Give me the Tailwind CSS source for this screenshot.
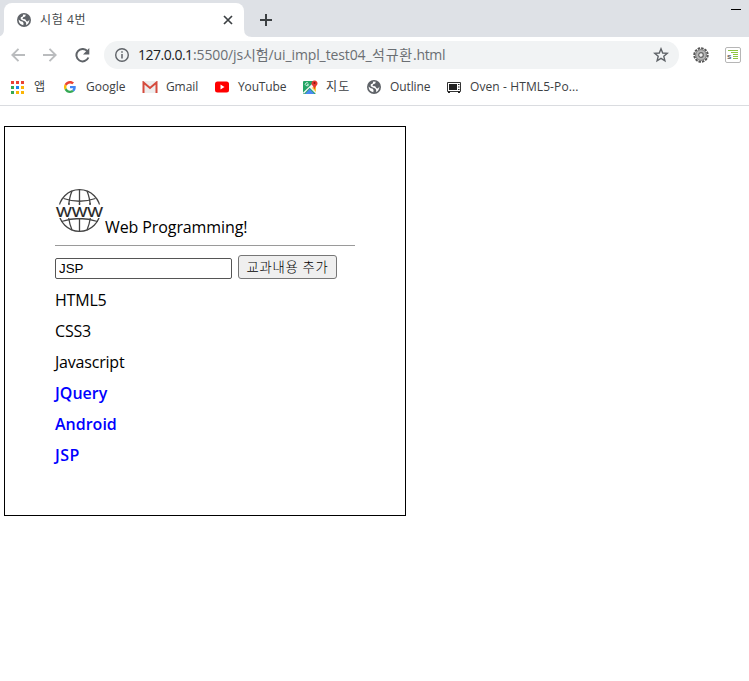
<!DOCTYPE html>
<html lang="ko">
<head>
<meta charset="utf-8">
<title>시험 4번</title>
<script src="https://cdn.jsdelivr.net/npm/@tailwindcss/browser@4"></script>
</head>
<body class="h-[681px] w-[749px] overflow-hidden bg-white font-['Open_Sans','Noto_Sans_CJK_KR',sans-serif] text-black">
<svg class="hidden">
  <symbol id="globe" viewBox="0 0 14 14"><circle cx="7" cy="7" r="7" fill="#5f6368"/><path d="M1.5 6.5 3.8 8.2 5.4 8.4 6.6 10 6.3 12.2Q2 11.5 1.5 6.5ZM6.2 1.6 8.8 1.8 8.2 3.4 6.2 4.2 5.5 6 8.2 6.3 9.5 8.2 11 8.4 12.4 6.4Q12.3 10.4 9 12L9.2 10 8.2 8.6 5.4 7.2 3.7 6.3 3.8 4.3 5.7 3.6Z" fill="#fff"/></symbol>
</svg>
<header>
  <div class="flex h-[37px] items-start bg-[#dee1e6] pl-1 pt-[3px]">
    <div class="relative flex h-[34px] w-[240px] items-center rounded-t-lg bg-white pl-[13px] pr-[11px]">
      <svg class="absolute -left-2 bottom-0" width="8" height="8"><path d="M8 0V8H0Q8 8 8 0Z" fill="#fff"/></svg>
      <svg class="absolute -right-2 bottom-0" width="8" height="8"><path d="M0 0V8H8Q0 8 0 0Z" fill="#fff"/></svg>
      <svg width="14" height="14"><use href="#globe"/></svg>
      <span class="ml-[9px] whitespace-nowrap text-[12px] leading-4 tracking-[0.6px] text-[#45494d]">시험 4번</span>
      <svg class="ml-auto" width="10" height="10" viewBox="0 0 10 10"><path d="M1 1 9 9M9 1 1 9" stroke="#3c4043" stroke-width="1.7"/></svg>
    </div>
    <svg class="ml-4 mt-[11px]" width="12" height="12" viewBox="0 0 12 12"><path d="M6 0V12M0 6H12" stroke="#3c4043" stroke-width="2"/></svg>
    <div class="ml-auto mr-2 mt-[6px] h-px w-[10px] bg-black"></div>
  </div>
  <div class="flex h-9 items-center pl-[11px] pr-2">
    <svg width="14" height="14" viewBox="0 0 14 14" fill="none" stroke="#babcbe" stroke-width="1.9"><path d="M14 7H1.5M7.5 .8 1.3 7 7.5 13.2"/></svg>
    <svg class="ml-[18px]" width="14" height="14" viewBox="0 0 14 14" fill="none" stroke="#babcbe" stroke-width="1.9"><path d="M0 7H12.5M6.5 .8 12.7 7 6.5 13.2"/></svg>
    <svg class="ml-[18px]" width="15" height="15" viewBox="0 0 15 15"><path d="M12.4 3.2A6.2 6.2 0 1 0 13.4 9.5" fill="none" stroke="#5f6368" stroke-width="2"/><path d="M14.3 0V6.4H8Z" fill="#5f6368"/></svg>
    <div class="ml-[14px] flex h-7 w-[575px] items-center rounded-full bg-[#f1f3f4] pl-[11px] pr-[10px]">
      <svg width="14" height="14" viewBox="0 0 14 14"><circle cx="7" cy="7" r="6.3" fill="none" stroke="#5f6368" stroke-width="1.4"/><path d="M7 6V10.5M7 3.3V4.8" stroke="#5f6368" stroke-width="1.5"/></svg>
      <div class="ml-[9px] flex whitespace-nowrap text-[14px] leading-5 text-[#6b6f73]"><span class="w-[55px] tracking-[-0.5px] text-[#202124]">127.0.0.1</span><span class="w-[179px] tracking-[-0.12px]">:5500/js시험/ui_impl_test04_</span><span class="w-[41px] tracking-[0.8px]">석규환</span><span class="tracking-[-0.3px]">.html</span></div>
      <svg class="ml-auto" width="16" height="16" viewBox="0 0 16 16"><path d="M8 1.8 9.7 6 14.3 6.3 10.8 9.3 11.9 13.8 8 11.4 4.1 13.8 5.2 9.3 1.7 6.3 6.3 6Z" fill="none" stroke="#5f6368" stroke-width="1.4"/></svg>
    </div>
    <svg class="ml-[14px]" width="16" height="16" viewBox="0 0 16 16"><circle cx="8" cy="8" r="6.7" fill="none" stroke="#555" stroke-width="2" stroke-dasharray="2.5 1"/><circle cx="8" cy="8" r="5.4" fill="#b5b5b5" stroke="#777"/><circle cx="8" cy="8" r="2.3" fill="#eee" stroke="#666" stroke-width="1.2"/></svg>
    <svg class="ml-4" width="16" height="16" viewBox="0 0 16 16"><rect x=".5" y=".5" width="15" height="15" rx="1.5" fill="#fff" stroke="#b6b6b6"/><path d="M3 3.5H13M6 5.5H13M8 7.5H13M8 9.5H13M8 11.5H13" stroke="#8cc63f"/><text x="2" y="12" font-size="8" font-weight="700" fill="#666" font-family="Liberation Sans">s</text></svg>
  </div>
  <nav class="flex h-[33px] items-center whitespace-nowrap border-b border-[#dadce0] pb-1 pl-[11px] text-[12px] leading-4 text-[#3c4043]">
    <div class="flex w-[53px] items-center"><svg width="13" height="13" viewBox="0 0 13 13"><path d="M0 0H3V3H0ZM5 0H8V3H5ZM10 0H13V3H10Z" fill="#ea4335"/><path d="M0 5H3V8H0ZM0 10H3V13H0Z" fill="#34a853"/><path d="M5 5H8V8H5Z" fill="#1a86f0"/><path d="M10 5H13V8H10ZM5 10H8V13H5ZM10 10H13V13H10Z" fill="#fbb506"/></svg><span class="ml-[10px]">앱</span></div>
    <div class="flex w-[78px] items-center"><svg width="12" height="12" viewBox="0 0 48 48"><path fill="#EA4335" d="M24 9.500c3.500 0 6.700 1.200 9.200 3.600l6.900-6.900C35.900 2.400 30.500 0 24 0 14.600 0 6.500 5.400 2.600 13.200l8 6.200C12.400 13.700 17.700 9.500 24 9.500z"/><path fill="#4285F4" d="M47 24.500c0-1.600-.2-3.100-.4-4.500H24v9h12.900c-.6 3-2.300 5.500-4.800 7.200l7.700 6C44.400 38 47 31.800 47 24.500z"/><path fill="#FBBC05" d="M10.500 28.600a14 14 0 0 1 0-9.200l-8-6.200a24 24 0 0 0 0 21.600z"/><path fill="#34A853" d="M24 48c6.500 0 11.900-2.100 15.900-5.800l-7.700-6c-2.200 1.400-4.900 2.300-8.200 2.300-6.300 0-11.600-4.200-13.500-9.900l-8 6.200C6.500 42.600 14.600 48 24 48z"/></svg><span class="ml-[10px]">Google</span></div>
    <div class="flex w-[73px] items-center"><svg width="16" height="12" viewBox="0 0 16 12"><path d="M1 0H15V12H1Z" fill="#eeeeee"/><path d="M1.500 12V1.500L8 7 14.500 1.500V12" fill="none" stroke="#d54b3d" stroke-width="2"/></svg><span class="ml-2 tracking-[-0.1px]">Gmail</span></div>
    <div class="flex w-[88px] items-center"><svg width="14" height="12" viewBox="0 0 14 12"><rect y=".5" width="14" height="11" rx="2.500" fill="#f00"/><path d="M5.500 3.600V8.400L9.500 6Z" fill="#fff"/></svg><span class="ml-[9px] tracking-[-0.15px]">YouTube</span></div>
    <div class="flex w-[64px] items-center"><svg width="15" height="14" viewBox="0 0 15 14"><rect y="1" width="13" height="13" rx="1" fill="#23a565"/><path d="M0 12.500 9 4 13 8V14L6.700 7.700 1 13.800Z" fill="#f2f2f2"/><path d="M2 14 6.700 9 11.500 14Z" fill="#4a89f3"/><path d="M9 8 13 4V12Z" fill="#fcc934"/><path d="M5.300 3.400A1.600 1.600 0 1 0 5.500 4.700H4" fill="none" stroke="#fff" stroke-width=".8"/><path d="M11.400 9.500Q11 7 8.700 4.500A3 3 0 1 1 14.300 4.500Q12 7 11.400 9.500Z" fill="#e5392f"/><circle cx="11.500" cy="3" r="1" fill="#811411"/></svg><span class="ml-2 tracking-[1.2px]">지도</span></div>
    <div class="flex w-[80px] items-center"><svg width="14" height="14"><use href="#globe"/></svg><span class="ml-[9px] tracking-[-0.1px]">Outline</span></div>
    <div class="flex items-center"><svg width="14" height="11" viewBox="0 0 14 11"><path d="M.5.500H13.500V9.500H.5Z" fill="#fff" stroke="#333"/><path d="M2 2H10V8H2ZM11 2H12.500V3H11ZM11 4.500H12.500V5.500H11ZM11 7H12.500V8H11ZM1 9.500H3V11H1ZM11 9.500H13V11H11Z" fill="#222"/></svg><span class="ml-[9px] tracking-[0.1px]">Oven - HTML5-Po...</span></div>
  </nav>
</header>
<main class="ml-1 mt-5 h-[390px] w-[402px] border border-black px-[50px] pt-[60px]">
  <div class="flex h-[59px] items-end border-b border-[#9a9a9a]">
    <svg class="mb-[11px]" width="50" height="48" viewBox="0 0 50 48" fill="none" stroke="#444" stroke-width="1.300"><circle cx="24.500" cy="24.500" r="20.800"/><path d="M24.500 3.500V45.500M17 5Q14 12 13.500 22M32 5Q35 12 35.500 22M17 44Q14.500 38 13.500 31M32 44Q34.500 38 35.500 31M8.500 12.500Q24.500 18 40.500 12.500M6.500 35.500Q24.500 29.500 42.500 35.500"/><path d="M0 18.500H49V32H0Z" fill="#fff" stroke="none"/><path d="M24.500 17V19M14 17V19M35 17V19" /><text x="1" y="30.500" font-family="Liberation Sans" font-size="15" textLength="47" lengthAdjust="spacingAndGlyphs" fill="#222" stroke="#222" stroke-width=".2">WWW</text></svg>
    <span class="mb-[6px] whitespace-nowrap text-[16px] leading-6 tracking-[-0.1px]">Web Programming!</span>
  </div>
  <div class="mt-[9px] flex items-end">
    <input type="text" value="JSP" class="h-[21px] w-[177px] rounded-[2px] border border-[#555] px-[3px] font-['Liberation_Sans'] text-[13.333px]">
    <button class="ml-[6px] h-6 w-[99px] whitespace-nowrap rounded-[3px] border border-[#767676] bg-[#efefef] text-[13.333px] font-light leading-5 tracking-[0.7px]">교과내용 추가</button>
  </div>
  <ul class="mt-[6px] text-[16px] leading-[31px]">
    <li class="tracking-[-0.2px]">HTML5</li>
    <li class="tracking-[-0.2px]">CSS3</li>
    <li class="tracking-[-0.2px]">Javascript</li>
    <li class="font-semibold text-[#00f]">JQuery</li>
    <li class="font-semibold text-[#00f]">Android</li>
    <li class="font-semibold tracking-[0.4px] text-[#00f]">JSP</li>
  </ul>
</main>
</body>
</html>
